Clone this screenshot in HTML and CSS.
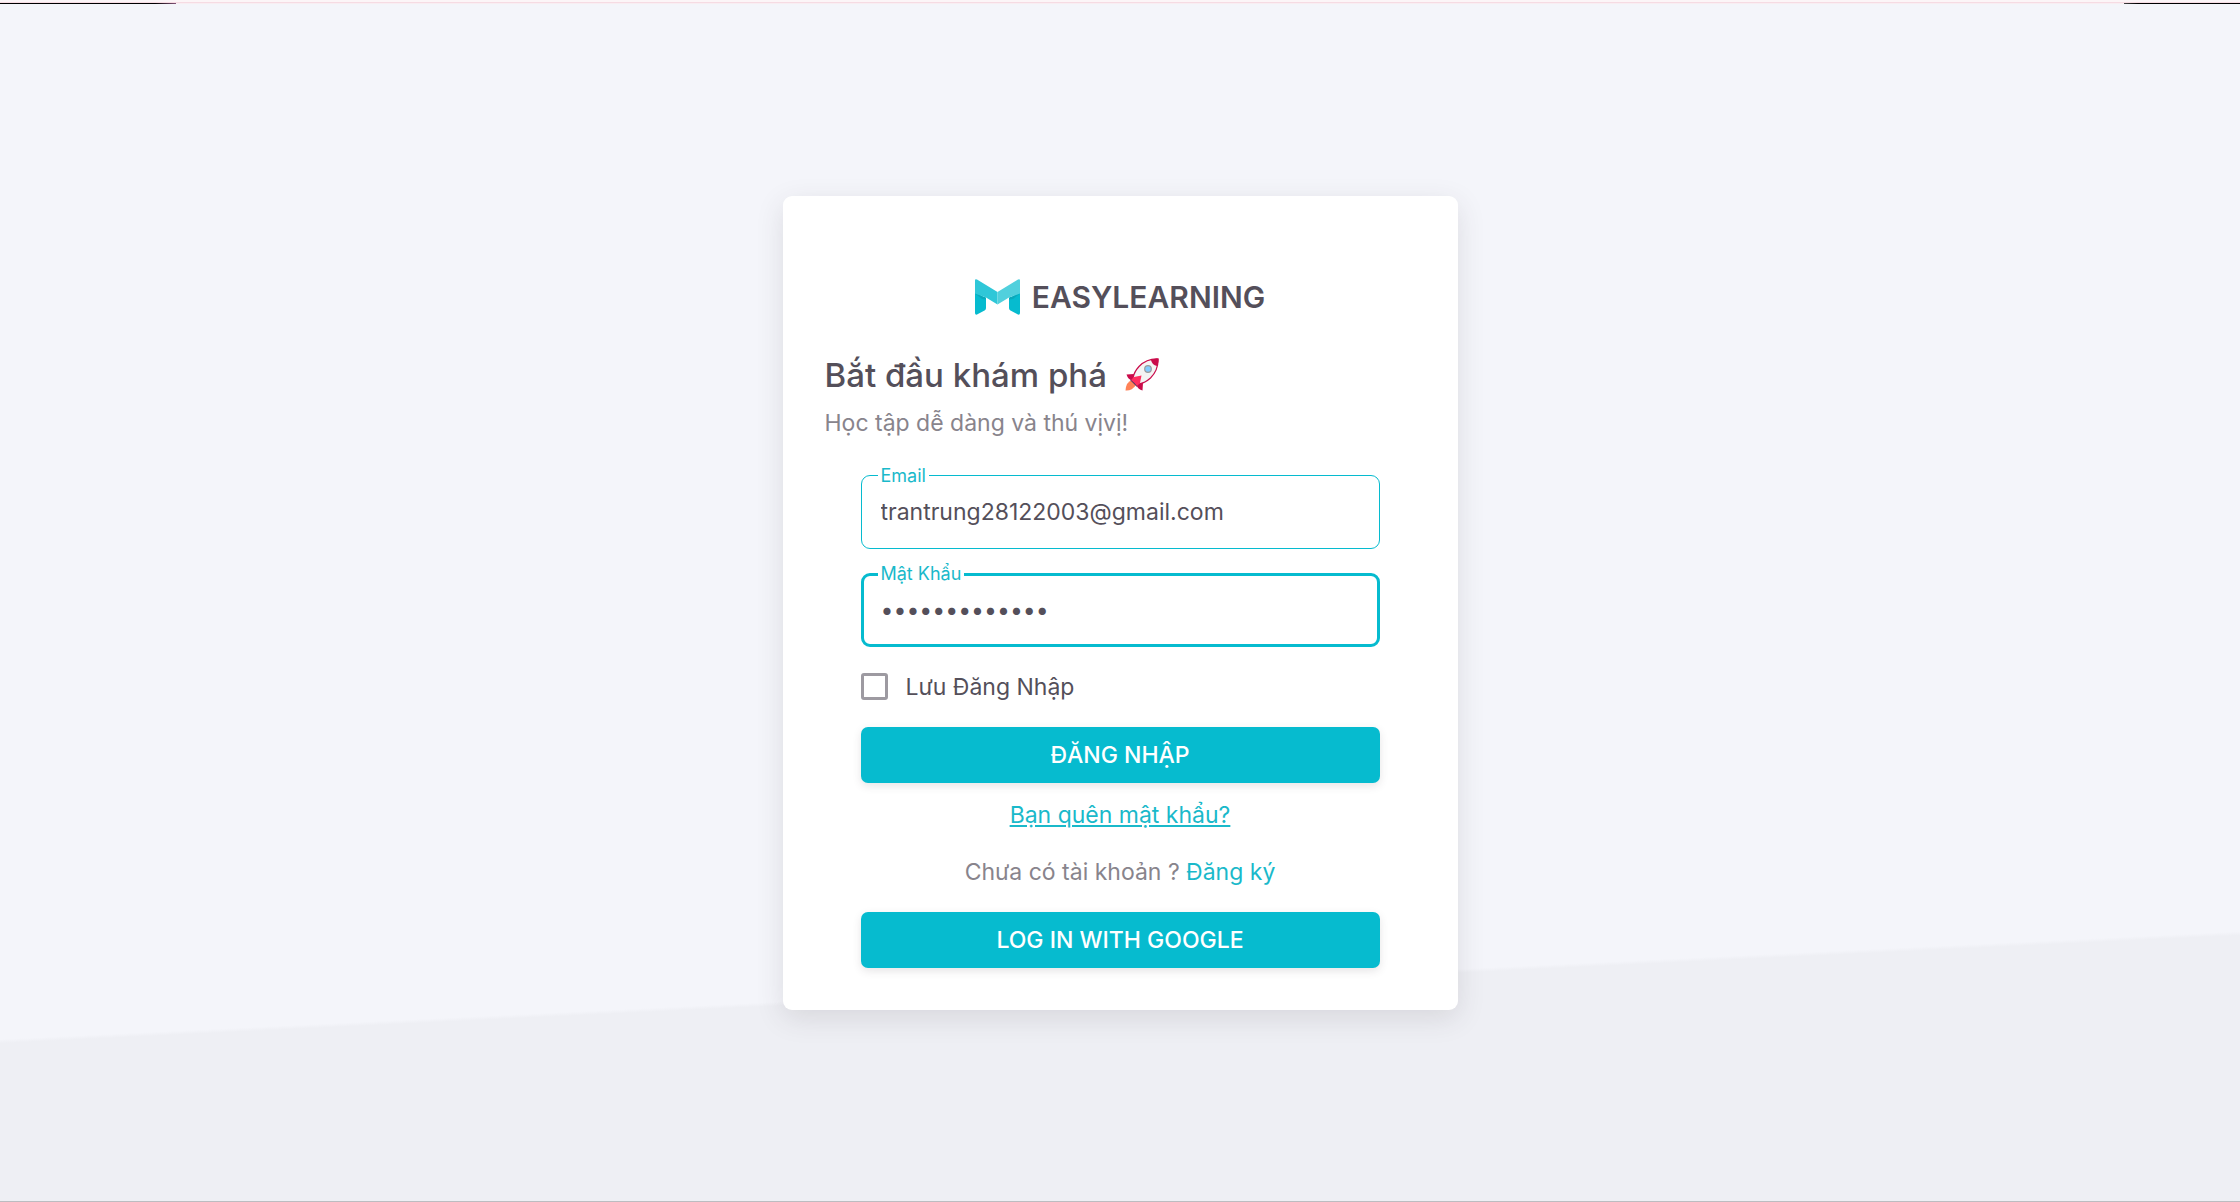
FILE: index.html
```html
<!DOCTYPE html>
<html lang="vi">
<head>
<meta charset="utf-8">
<meta name="viewport" content="width=device-width, initial-scale=1">
<title>EasyLearning</title>
<link rel="stylesheet" href="styles.css">
</head>
<body>
<div class="page">
  <div class="edge"><span class="edge-left"></span><span class="edge-right"></span></div>
  <main class="content">
    <section class="card">
      <div class="brand">
        <svg class="logo" viewBox="0 0 45 36" aria-hidden="true">
          <path fill="#06bbcf" d="M0 12 11 20V29Q11 30.500 10 31.200L2 35.600Q0 36 0 34ZM45 12 34 20V29Q34 30.500 35 31.200L43 35.600Q45 36 45 34Z"/>
          <path fill="#0aa9bb" d="M0 14.500 11 18.500V20.500L7 20ZM45 14.500 34 18.500V20.500L38 20Z"/>
          <path fill="#2fc7d8" d="M0 1.500Q0-.5 2 .5L22.500 13V25.500L11 18.500 0 14.500Z"/>
          <path fill="#51d0dd" d="M45 1.500Q45-.5 43 .5L22.500 13V25.500L34 18.500 45 14.500Z"/>
        </svg>
        <span class="brand-name">EASYLEARNING</span>
      </div>
      <h1 class="title"><span>Bắt đầu khám phá</span>
        <svg class="rocket" viewBox="0 0 34 34" role="img" aria-label="Tên lửa">
          <path fill="#ff8257" d="M7 22Q1 24 .5 32.500 7 33 11 27Z"/>
          <path fill="#533566" d="M5 22 12 29 14 27 7 20Z"/>
          <path fill="#ca0b4a" d="M9 16 1.500 16.500Q3 21 6 22L9 20ZM18 25 17.500 32.500Q13 31 12 28L14 25Z"/>
          <path fill="#f4f4f4" stroke="#ca0b4a" stroke-width="1.200" d="M33 1Q22 .5 14 8.500 9 14 8 20L14 26Q20 25 25.500 20 33.500 12 33 1Z"/>
          <path fill="#ca0b4a" d="M33.500.5Q30 0 26 2 27 7 32 8 34 4 33.500.5Z"/>
          <path fill="#ff2e5f" d="M6 22 9 19 16.500 17.500 15 25 12 28Q10 25 6 22Z"/>
          <circle cx="23" cy="11" r="3.300" fill="#83cbff" stroke="#9b9b9b" stroke-width="1.200"/>
        </svg>
      </h1>
      <p class="subtitle">Học tập dễ dàng và thú vịvị!</p>
      <form class="form">
        <div class="field">
          <input id="email" type="email" value="trantrung28122003@gmail.com">
          <label for="email">Email</label>
        </div>
        <div class="field field-active">
          <input id="password" type="password" value="matkhau281220">
          <label for="password">Mật Khẩu</label>
        </div>
        <div class="remember">
          <input id="remember" type="checkbox">
          <label for="remember">Lưu Đăng Nhập</label>
        </div>
        <button class="button" type="submit">ĐĂNG NHẬP</button>
        <a class="forgot" href="#">Bạn quên mật khẩu?</a>
        <p class="signup">Chưa có tài khoản ? <a href="#">Đăng ký</a></p>
        <button class="button" type="button">LOG IN WITH GOOGLE</button>
      </form>
    </section>
  </main>
</div>
</body>
</html>
```
FILE: styles.css
```css
* {
  box-sizing: border-box;
}

body {
  margin: 0;
  color: #544f5a;
  font-family: Inter, "Noto Sans", sans-serif;
  font-size: 23px;
  line-height: 32px;
}

.page {
  display: flex;
  flex-direction: column;
  min-height: 100vh;
  border-bottom: 1px solid #bcbcc0;
  background: linear-gradient(177.24deg, #f4f5fa 79.4%, #eeeff4 79.7%);
}

/* Thin strip along the top of the window */
.edge {
  display: flex;
  justify-content: space-between;
  height: 4px;
  border-top: 2px solid #fcf5f7;
  background: linear-gradient(#f6dbe3 50%, #f8eef2 50%);
}

.edge span {
  height: 1px;
  margin-top: 1px;
}

.edge-left {
  width: 176px;
  background: linear-gradient(90deg, #000 88%, #84557a);
}

.edge-right {
  width: 116px;
  background: linear-gradient(270deg, #000 88%, #444);
}

.content {
  display: flex;
  flex: 1;
  align-items: center;
  justify-content: center;
  padding: 24px;
}

.card {
  width: 100%;
  max-width: 675px;
  padding: 77px 42px 42px;
  border-radius: 9px;
  background: #fff;
  box-shadow: 0 8px 28px rgba(58, 53, 65, 0.13);
}

.brand {
  display: flex;
  align-items: center;
  justify-content: center;
  gap: 12px;
  margin-bottom: 34px;
}

.logo {
  width: 45px;
  height: 36px;
}

.brand-name {
  font-size: 30px;
  font-weight: 600;
  line-height: 48px;
}

.title {
  display: flex;
  align-items: center;
  gap: 18px;
  margin: 0 0 12px;
  font-size: 33px;
  font-weight: 500;
  line-height: 40px;
}

.rocket {
  width: 34px;
  height: 34px;
}

.subtitle {
  margin: 0 0 36px;
  color: #88848c;
}

.form {
  display: flex;
  flex-direction: column;
  padding: 0 36px;
}

.field {
  position: relative;
  margin-bottom: 24px;
}

.field input {
  display: block;
  width: 100%;
  height: 74px;
  padding: 0 19px;
  border: 1px solid #06bbcf;
  border-radius: 9px;
  background: #fff;
  color: inherit;
  font: inherit;
  outline: 0;
}

.field-active input {
  padding: 0 17px;
  border-width: 3px;
}

.field label {
  position: absolute;
  top: -11px;
  left: 17px;
  padding: 0 3px;
  background: #fff;
  color: #1ab9ca;
  font-size: 18px;
  line-height: 24px;
}

.remember {
  display: flex;
  align-items: center;
  gap: 18px;
  margin-bottom: 24px;
}

.remember input {
  width: 27px;
  height: 27px;
  margin: 0;
  border: 3px solid #9d9aa1;
  border-radius: 3px;
  appearance: none;
}

.button {
  height: 56px;
  border: 0;
  border-radius: 7px;
  background: #06bbcf;
  box-shadow: 0 3px 8px rgba(58, 53, 65, 0.13);
  color: #fff;
  font: 500 23px/32px Inter, "Noto Sans", sans-serif;
}

a {
  color: #1ab9ca;
}

.forgot {
  align-self: center;
  margin: 16px 0 25px;
}

.signup {
  margin: 0 0 24px;
  color: #88848c;
  text-align: center;
}

.signup a {
  text-decoration: none;
}
```
